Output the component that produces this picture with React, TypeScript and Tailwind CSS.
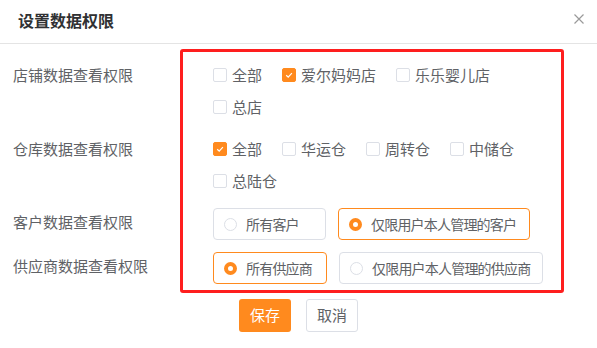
import React from 'react';

function Checkbox({ label, checked }: { label: string; checked?: boolean }) {
  return (
    <label className="mr-[20px] flex h-[32px] items-center">
      <span
        className={`flex h-[14px] w-[14px] items-center justify-center rounded-[2px] border ${
          checked ? 'border-[#ff8a1e] bg-[#ff8a1e]' : 'border-[#dcdfe6] bg-white'
        }`}
      >
        {checked && (
          <svg width="10" height="10" viewBox="0 0 10 10" fill="none">
            <path d="M2.2 5.2 L4.2 7.1 L7.9 3.2" stroke="white" strokeWidth="1.2" />
          </svg>
        )}
      </span>
      <span className="ml-[5px] text-[15px] text-[#606266]">{label}</span>
    </label>
  );
}

function RadioBox({ label, checked, className }: { label: string; checked?: boolean; className: string }) {
  return (
    <div
      className={`flex h-[32px] shrink-0 items-center rounded-[4px] border pl-[10px] ${
        checked ? 'border-[#ff8a1e]' : 'border-[#dcdfe6]'
      } ${className}`}
    >
      <span
        className={`box-border h-[13px] w-[13px] shrink-0 rounded-full bg-white ${
          checked ? 'border-[4px] border-[#ff8a1e]' : 'border border-[#dcdfe6]'
        }`}
      />
      <span className="ml-[9px] whitespace-nowrap text-[14px] tracking-[-0.8px] text-[#606266]">{label}</span>
    </div>
  );
}

export default function App() {
  return (
    <div
      className="h-[348px] w-[597px] overflow-hidden bg-white"
      style={{ fontFamily: '"Noto Sans CJK SC", "Noto Sans", sans-serif' }}
    >
      {/* Header */}
      <div className="flex h-[44px] items-start justify-between border-b border-[#e4e4e4] pl-[18px] pr-[13px]">
        <div className="mt-[12px] text-[16px] font-bold leading-[16px] text-[#303133]">设置数据权限</div>
        <svg className="mt-[14px]" width="10" height="10" viewBox="0 0 10 10">
          <path d="M0.5 0.5 L9.5 9.5 M9.5 0.5 L0.5 9.5" stroke="#9a9a9a" strokeWidth="1.2" />
        </svg>
      </div>

      {/* Form */}
      <div className="relative pl-[13px] pt-[15px]">
        <div className="flex">
          <div className="w-[200px] text-[15px] leading-[32px] text-[#606266]">店铺数据查看权限</div>
          <div className="flex w-[332px] flex-wrap">
            <Checkbox label="全部" />
            <Checkbox label="爱尔妈妈店" checked />
            <Checkbox label="乐乐婴儿店" />
            <Checkbox label="总店" />
          </div>
        </div>

        <div className="mt-[10px] flex">
          <div className="w-[200px] text-[15px] leading-[32px] text-[#606266]">仓库数据查看权限</div>
          <div className="flex w-[332px] flex-wrap">
            <Checkbox label="全部" checked />
            <Checkbox label="华运仓" />
            <Checkbox label="周转仓" />
            <Checkbox label="中储仓" />
            <Checkbox label="总陆仓" />
          </div>
        </div>

        <div className="mt-[11px] flex">
          <div className="w-[200px] text-[15px] leading-[28px] text-[#606266]">客户数据查看权限</div>
          <div className="flex gap-[12px]">
            <RadioBox label="所有客户" className="w-[113px]" />
            <RadioBox label="仅限用户本人管理的客户" checked className="w-[192px]" />
          </div>
        </div>

        <div className="mt-[12px] flex">
          <div className="w-[200px] text-[15px] leading-[28px] text-[#606266]">供应商数据查看权限</div>
          <div className="flex gap-[12px]">
            <RadioBox label="所有供应商" checked className="w-[114px]" />
            <RadioBox label="仅限用户本人管理的供应商" className="w-[204px]" />
          </div>
        </div>

        {/* highlight annotation */}
        <div className="pointer-events-none absolute left-[180px] top-[5px] h-[244px] w-[384px] rounded-[3px] border-[3px] border-[#fe1e1e]" />
      </div>

      {/* Buttons */}
      <div className="mt-[15px] flex justify-center gap-[15px]">
        <button className="h-[33px] w-[52px] rounded-[3px] bg-[#ff8a1e] text-[15px] text-white">保存</button>
        <button className="h-[33px] w-[52px] rounded-[3px] border border-[#dcdfe6] bg-white text-[15px] text-[#606266]">
          取消
        </button>
      </div>
    </div>
  );
}
